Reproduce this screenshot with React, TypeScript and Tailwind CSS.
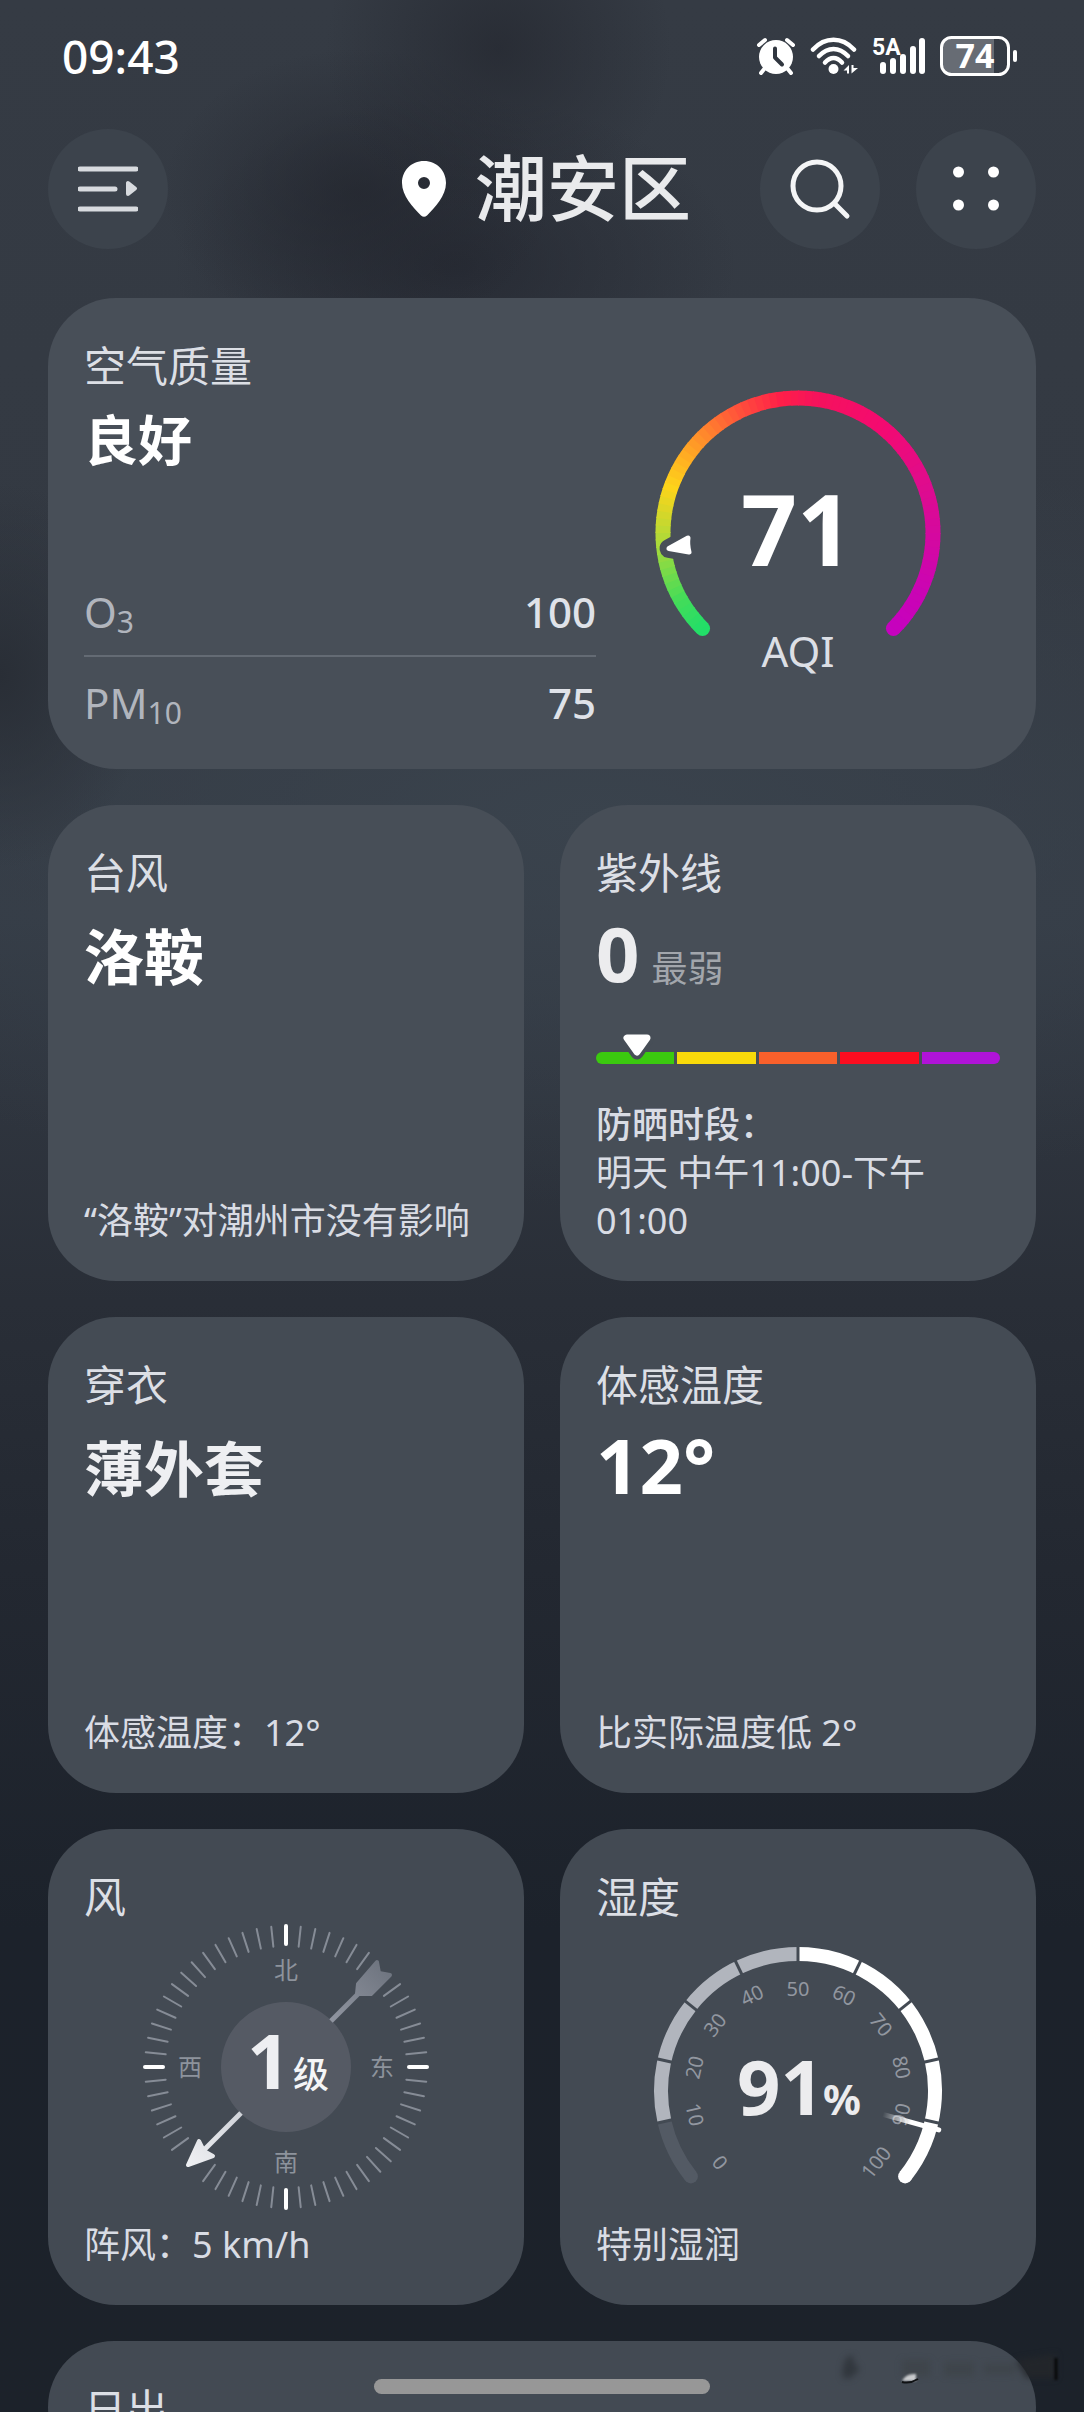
import type { ReactNode } from 'react';

const polar = (r: number, deg: number) => {
  const a = (deg * Math.PI) / 180;
  return [r * Math.sin(a), -r * Math.cos(a)] as const;
};

const arc = (r: number, from: number, to: number) => {
  const [x1, y1] = polar(r, from);
  const [x2, y2] = polar(r, to);
  return `M${x1} ${y1}A${r} ${r} 0 ${Math.abs(to - from) > 180 ? 1 : 0} 1 ${x2} ${y2}`;
};

/* ---------- Status bar ---------- */

function AlarmIcon() {
  return (
    <svg viewBox="0 0 40 38" className="h-[38px] w-10" fill="none" strokeLinecap="round" aria-hidden="true">
      <path d="M3 8 9 3M37 8 31 3M9 31 5 36M31 31 35 36" stroke="#fff" strokeWidth="4" />
      <circle cx="20" cy="20" r="17" fill="#fff" />
      <path d="M19 11.500V20.500L26 27.500" stroke="#30363f" strokeWidth="4" strokeLinejoin="round" />
    </svg>
  );
}

function WifiIcon() {
  return (
    <svg viewBox="0 0 48 38" className="h-[38px] w-12" fill="none" aria-hidden="true">
      <g stroke="#fff" strokeWidth="4.500" strokeLinecap="round">
        <path d="M3 12.500C15-.5 32-.5 44 12.500" />
        <path d="M9 19C18 9.500 29 9.500 38 19" />
        <path d="M15 25.500C20.500 19.500 26.500 19.500 32 25.500" />
      </g>
      <circle cx="23.500" cy="32" r="5" fill="#fff" />
      <path d="M39 28V36.500H37V33.500H33.500ZM41.500 36.500V28H43.500V31H48Z" fill="#fff" />
    </svg>
  );
}

function SignalIcon() {
  return (
    <svg viewBox="0 0 54 38" className="h-[38px] w-[54px] overflow-visible" aria-hidden="true">
      <text x="0" y="18" fill="#fff" fontSize="23" className="font-['Roboto',sans-serif] font-bold">5A</text>
      <g fill="#fff">
        <rect x="8" y="25" width="6" height="12" rx="3" />
        <rect x="18" y="21" width="6" height="16" rx="3" />
        <rect x="28" y="17" width="6" height="20" rx="3" />
        <rect x="38" y="9" width="6" height="28" rx="3" />
        <rect x="47" y="1" width="6" height="36" rx="3" />
      </g>
    </svg>
  );
}

function BatteryIcon() {
  return (
    <svg viewBox="0 0 78 40" className="h-10 w-[78px] overflow-visible" role="img" aria-label="74%">
      <path d="M13 2H54V38H13Q2 38 2 27V13Q2 2 13 2Z" fill="#676c74" />
      <rect x="1.500" y="1.500" width="67" height="37" rx="10" fill="none" stroke="#fff" strokeWidth="3" />
      <rect x="73" y="14" width="4" height="12" rx="2" fill="#fff" />
      <text x="35" y="32" textAnchor="middle" fill="#fff" fontSize="34" className="font-['Noto_Sans',sans-serif] font-bold">74</text>
    </svg>
  );
}

/* ---------- Shared pieces ---------- */

function Card({ title, className = '', children }: { title: string; className?: string; children?: ReactNode }) {
  return (
    <section className={`flex flex-col rounded-[68px] px-9 pt-10 pb-9 ${className}`}>
      <h2 className="text-[42px] leading-[56px] text-[#dcdfe5]">{title}</h2>
      {children}
    </section>
  );
}

function RoundButton({ label, children }: { label: string; children: ReactNode }) {
  return (
    <button type="button" aria-label={label} className="flex size-[120px] items-center justify-center rounded-full bg-[#3c434c]">
      {children}
    </button>
  );
}

function Footer({ children }: { children: ReactNode }) {
  return <p className="mt-auto text-[36px] leading-[48px] text-[#d9dce4]">{children}</p>;
}

/* ---------- Air quality ---------- */

const AQI_STOPS: [number, number[]][] = [
  [0, [34, 222, 104]],
  [0.06, [70, 220, 88]],
  [0.15, [170, 218, 58]],
  [0.24, [254, 212, 26]],
  [0.31, [255, 160, 38]],
  [0.4, [255, 84, 58]],
  [0.47, [255, 32, 72]],
  [0.53, [245, 18, 92]],
  [0.64, [244, 10, 112]],
  [0.76, [222, 12, 142]],
  [0.93, [202, 4, 180]],
  [1, [198, 2, 190]],
];

function aqiColor(t: number) {
  let i = 1;
  while (i < AQI_STOPS.length - 1 && AQI_STOPS[i][0] < t) i++;
  const [t0, a] = AQI_STOPS[i - 1];
  const [t1, b] = AQI_STOPS[i];
  const k = Math.max(0, Math.min(1, (t - t0) / (t1 - t0)));
  return `rgb(${a.map((v, n) => Math.round(v + (b[n] - v) * k)).join(',')})`;
}

function AqiGauge() {
  const steps = 90;
  const [sx, sy] = polar(135, -135);
  const [ex, ey] = polar(135, 135);
  const marker = 'M-129 15.500 -110 5Q-111 11-109 19Z';
  return (
    <svg viewBox="-150 -150 300 300" className="w-[300px] max-w-full" role="img" aria-label="AQI 71">
      <mask id="aqi-cut" maskUnits="userSpaceOnUse" x="-150" y="-150" width="300" height="300">
        <rect x="-150" y="-150" width="300" height="300" fill="#fff" />
        <path d={marker} fill="#000" stroke="#000" strokeWidth="19" strokeLinejoin="round" />
      </mask>
      <g mask="url(#aqi-cut)">
        <circle cx={sx} cy={sy} r="7.500" fill={aqiColor(0)} />
        <circle cx={ex} cy={ey} r="7.500" fill={aqiColor(1)} />
        {Array.from({ length: steps }, (_, i) => {
          const from = -135 + (270 / steps) * i;
          const to = Math.min(135, from + 270 / steps + 0.5);
          return <path key={i} d={arc(135, from, to)} fill="none" stroke={aqiColor((i + 0.5) / steps)} strokeWidth="15" />;
        })}
      </g>
      <path d={marker} fill="#fff" stroke="#fff" strokeWidth="5" strokeLinejoin="round" />
      <text x="-1" y="33" textAnchor="middle" fill="#fff" fontSize="98" className="font-bold">71</text>
      <text x="0" y="134" textAnchor="middle" fill="#dcdfe5" fontSize="42">AQI</text>
    </svg>
  );
}

function AirQuality() {
  return (
    <section className="col-span-2 grid grid-cols-[512fr_404fr] rounded-[68px] bg-[#484f58] px-9 pt-10 pb-6">
      <div className="flex flex-col">
        <h2 className="text-[42px] leading-[56px] text-[#dcdfe5]">空气质量</h2>
        <p className="mt-[10px] text-[54px] leading-[72px] font-bold text-white">良好</p>
        <dl className="mt-[89px] text-[42px] leading-[56px]">
          <div className="flex h-[92px] items-center justify-between border-b-2 border-[#646b74] pt-1">
            <dt className="text-[#b1b5bd]">O<sub className="bottom-[-5px] text-[30px]">3</sub></dt>
            <dd className="font-medium text-[#dfe2e8]">100</dd>
          </div>
          <div className="flex h-[88px] items-center justify-between pt-1">
            <dt className="text-[#b1b5bd]">PM<sub className="bottom-[-5px] text-[30px]">10</sub></dt>
            <dd className="font-medium text-[#dfe2e8]">75</dd>
          </div>
        </dl>
      </div>
      <div className="flex items-start justify-center pt-[45px]">
        <AqiGauge />
      </div>
    </section>
  );
}

/* ---------- UV index ---------- */

function UvBar() {
  return (
    <div className="relative mt-[63px]" role="img" aria-label="紫外线指数 0">
      <div className="flex h-3 gap-[3px] overflow-hidden rounded-full">
        <span className="flex-1 bg-[#3bc90f]" />
        <span className="flex-1 bg-[#f9da0a]" />
        <span className="flex-1 bg-[#f9602b]" />
        <span className="flex-1 bg-[#fc0d20]" />
        <span className="flex-1 bg-[#b013d8]" />
      </div>
      <svg viewBox="-17 -17 34 34" className="absolute top-[-21px] left-[6%] size-[34px]" aria-hidden="true">
        <path d="M-10-9H10L0 5Z" fill="#474e57" stroke="#474e57" strokeWidth="13" strokeLinejoin="round" />
        <path d="M-10-10H10L0 4Z" fill="#fff" stroke="#fff" strokeWidth="7" strokeLinejoin="round" />
      </svg>
    </div>
  );
}

/* ---------- Wind compass ---------- */

function Compass() {
  const hidden = [42, 48, 222, 228];
  return (
    <svg viewBox="-144 -142 288 286" className="w-[288px] max-w-full self-center overflow-visible" role="img" aria-label="东北风 1级">
      <defs>
        <linearGradient id="wind-head" gradientUnits="userSpaceOnUse" x1="-100" y1="100" x2="-44" y2="44">
          <stop offset="0" stopColor="#f0f1f4" />
          <stop offset="1" stopColor="#cfd2d8" />
        </linearGradient>
        <linearGradient id="wind-tail" gradientUnits="userSpaceOnUse" x1="46" y1="-46" x2="104" y2="-104">
          <stop offset="0" stopColor="#9095a0" />
          <stop offset="1" stopColor="#6c727d" />
        </linearGradient>
      </defs>
      {Array.from({ length: 60 }, (_, i) => i * 6)
        .filter((deg) => !hidden.includes(deg))
        .map((deg) => {
          const major = deg % 90 === 0;
          const [x1, y1] = polar(141, deg);
          const [x2, y2] = polar(major ? 123 : 121, deg);
          return (
            <line key={deg} x1={x1} y1={y1} x2={x2} y2={y2} stroke={major ? '#fff' : '#868c96'} strokeWidth={major ? 4 : 2} strokeLinecap="round" />
          );
        })}
      <circle r="65" fill="#555a64" />
      <path d="M-45 46-88 89" stroke="url(#wind-head)" strokeWidth="5" />
      <path d="M-98 98-87 74-82 84-73 89Z" fill="url(#wind-head)" stroke="url(#wind-head)" strokeWidth="4" strokeLinejoin="round" />
      <path d="M45-46 74-75" stroke="url(#wind-tail)" strokeWidth="5" />
      <path d="M71-73 72-83 91-105 93-94 104-92 85-73Z" fill="url(#wind-tail)" stroke="url(#wind-tail)" strokeWidth="4" strokeLinejoin="round" />
      <g fill="#8d939c" fontSize="24" textAnchor="middle">
        <text x="0" y="-88">北</text>
        <text x="0" y="104">南</text>
        <text x="-96" y="9">西</text>
        <text x="96" y="9">东</text>
      </g>
      <text x="-39" y="22" fill="#eeeff2" fontSize="76" className="font-bold">1</text>
      <text x="7" y="21" fill="#f4f5f7" fontSize="36" className="font-medium">级</text>
    </svg>
  );
}

/* ---------- Humidity gauge ---------- */

function HumidityGauge() {
  const span = 1800 / 7;
  const start = -span / 2;
  const at = (v: number) => start + (span * v) / 100;
  const [sx, sy] = polar(137, start);
  const [ex, ey] = polar(137, -start);
  const [nx1, ny1] = polar(88, at(91));
  const [nx2, ny2] = polar(146, at(91));
  const labels = [
    [0, -1.5],
    [10, 10],
    [20, 20],
    [30, 30],
    [40, 40],
    [50, 50],
    [60, 60],
    [70, 70],
    [80, 80],
    [90, 90],
    [100, 101.5],
  ];
  return (
    <svg viewBox="-150 -166 300 266" className="w-[300px] max-w-full self-center" role="img" aria-label="湿度 91%">
      <defs>
        <linearGradient id="needle" gradientUnits="userSpaceOnUse" x1={nx1} y1={ny1} x2={nx2} y2={ny2}>
          <stop offset="0" stopColor="#fff" stopOpacity="0" />
          <stop offset="0.5" stopColor="#fff" />
        </linearGradient>
      </defs>
      <circle cx={sx} cy={sy} r="7" fill="#535a64" />
      <circle cx={ex} cy={ey} r="7" fill="#fff" />
      <g fill="none" strokeWidth="14">
        <path d={arc(137, at(0), at(10))} stroke="#535a64" />
        <path d={arc(137, at(10), at(50))} stroke="#b1b5bd" />
        <path d={arc(137, at(50), at(100))} stroke="#fff" />
      </g>
      {[10, 20, 30, 40, 50, 60, 70, 80, 90].map((v) => {
        const [x1, y1] = polar(129, at(v));
        const [x2, y2] = polar(145, at(v));
        return <line key={v} x1={x1} y1={y1} x2={x2} y2={y2} stroke="#434a53" strokeWidth="3" />;
      })}
      {labels.map(([v, place]) => {
        const [x, y] = polar(v === 50 ? 102 : 106, at(place));
        const turn = at(v) > 90 ? at(v) - 180 : at(v) < -90 ? at(v) + 180 : at(v);
        return (
          <text key={v} transform={`translate(${x} ${y}) rotate(${turn})`} y="7" textAnchor="middle" fill="#9297a0" fontSize="20">
            {v}
          </text>
        );
      })}
      <line x1={nx1} y1={ny1} x2={nx2} y2={ny2} stroke="url(#needle)" strokeWidth="5" strokeLinecap="round" />
      <text x="-61" y="24" fill="#ececee" fontSize="76" className="font-bold">91</text>
      <text x="25" y="24" fill="#ececee" fontSize="42" className="font-bold">%</text>
    </svg>
  );
}

/* Faint smudge lying over the lower right corner. */
function Smudge() {
  return (
    <svg viewBox="0 0 224 40" className="absolute right-5 bottom-5 h-10 w-56 overflow-visible" aria-hidden="true">
      <g className="blur-[3px]">
        <path d="M2 22Q4 2 13 4Q13 14 20 16Q10 30 4 26Z" fill="#2d3238" opacity=".8" />
        <path d="M62 8H90V24H62ZM104 10H134V24H104ZM144 12H176V22H144Z" fill="#3a3f44" opacity=".5" />
        <path d="M176 8 216 2V26H186Z" fill="#24272b" opacity=".8" />
      </g>
      <path d="M216 6V28" stroke="#08090a" strokeWidth="3" className="blur-[1px]" />
      <path d="M62 29Q66 21 76 22V29Z" fill="#c9cbcd" className="blur-[1px]" />
      <path d="M62 30Q70 32 78 27" stroke="#101214" strokeWidth="2" fill="none" />
    </svg>
  );
}

/* ---------- Page ---------- */

export default function App() {
  return (
    <div className="relative isolate flex h-screen flex-col overflow-hidden bg-[#2b3039] font-['Noto_Sans','Noto_Sans_CJK_SC',sans-serif]">
      <div
        className="absolute inset-0 -z-10 bg-[radial-gradient(ellipse_16%_7%_at_46%_2%,#23262eaa,transparent),radial-gradient(ellipse_18%_6%_at_33%_8%,#22252daa,transparent),radial-gradient(ellipse_26%_7%_at_42%_11%,#22252ebb,transparent),radial-gradient(ellipse_14%_8%_at_0%_28%,#292e36,transparent),radial-gradient(ellipse_90%_16%_at_55%_34%,#3a434d,transparent),linear-gradient(to_bottom,#353b44_0%,#333942_30%,#343b45_38%,#292e37_54%,#232831_65%,#1c222b_80%,#1c222a_100%)]"
        aria-hidden="true"
      />
      <div className="flex h-28 shrink-0 items-center justify-between pr-[66px] pl-[62px] text-white">
        <time className="text-[46px] leading-[56px] font-medium">09:43</time>
        <div className="flex items-center gap-3.5">
          <AlarmIcon />
          <WifiIcon />
          <SignalIcon />
          <BatteryIcon />
        </div>
      </div>

      <header className="grid shrink-0 grid-cols-[1fr_auto_1fr] items-center px-12 pt-[17px] pb-[49px]">
        <RoundButton label="菜单">
          <svg viewBox="0 0 60 48" className="h-12 w-[60px]" fill="none" aria-hidden="true">
            <path d="M2 4H58M2 24H37M2 44H58" stroke="#d8dbdf" strokeWidth="5" strokeLinecap="round" />
            <path d="M50 18V29L57 23.500Z" fill="#d8dbdf" stroke="#d8dbdf" strokeWidth="4" strokeLinejoin="round" />
          </svg>
        </RoundButton>
        <div className="flex items-center gap-7 pl-2">
          <svg viewBox="0 0 46 56" className="h-14 w-[46px]" aria-hidden="true">
            <path d="M23 0C10 0 1 10 1 22C1 35 12 46 20 54.500Q23 57 26 54.500C34 46 45 35 45 22C45 10 36 0 23 0ZM23 16A6 6 0 1 1 23 28A6 6 0 1 1 23 16Z" fill="#fff" fillRule="evenodd" />
          </svg>
          <h1 className="pb-1 text-[72px] leading-[96px] font-medium text-[#e9eaec]">潮安区</h1>
        </div>
        <div className="flex justify-end gap-9">
          <RoundButton label="搜索">
            <svg viewBox="0 0 62 62" className="size-[62px]" fill="none" stroke="#f4f5f6" strokeWidth="5" strokeLinecap="round" aria-hidden="true">
              <circle cx="28" cy="28" r="24" />
              <path d="M46 46 58 58" />
            </svg>
          </RoundButton>
          <RoundButton label="更多">
            <svg viewBox="0 0 46 46" className="size-[46px]" fill="#fff" aria-hidden="true">
              <circle cx="5.500" cy="6" r="5.500" />
              <circle cx="40.500" cy="6" r="5.500" />
              <circle cx="5.500" cy="39" r="5.500" />
              <circle cx="40.500" cy="39" r="5.500" />
            </svg>
          </RoundButton>
        </div>
      </header>

      <main className="grid min-h-0 flex-1 grid-cols-2 content-start gap-9 overflow-y-auto px-12 [scrollbar-width:none]">
        <AirQuality />

        <Card title="台风" className="aspect-square bg-[#474e57]">
          <p className="mt-5 text-[60px] leading-[72px] font-bold text-white">洛鞍</p>
          <Footer>“洛鞍”对潮州市没有影响</Footer>
        </Card>

        <Card title="紫外线" className="aspect-square bg-[#474e57]">
          <p className="mt-4 flex h-[72px] items-baseline gap-3 leading-[72px]">
            <span className="text-[76px] font-bold text-[#ececee]">0</span>
            <span className="text-[36px] text-[#a2a6ac]">最弱</span>
          </p>
          <UvBar />
          <Footer>
            <span className="block font-medium">防晒时段：</span>
            明天 中午11:00-下午01:00
          </Footer>
        </Card>

        <Card title="穿衣" className="aspect-square bg-[#444b54]">
          <p className="mt-5 text-[60px] leading-[72px] font-semibold text-[#eeeff2]">薄外套</p>
          <Footer>体感温度：12°</Footer>
        </Card>

        <Card title="体感温度" className="aspect-square bg-[#444b54]">
          <p className="mt-4 text-[76px] leading-[72px] font-bold text-white">12°</p>
          <Footer>比实际温度低 2°</Footer>
        </Card>

        <Card title="风" className="aspect-square bg-[#434a53]">
          <Compass />
          <Footer>阵风：5 km/h</Footer>
        </Card>

        <Card title="湿度" className="aspect-square bg-[#434a53]">
          <HumidityGauge />
          <Footer>特别湿润</Footer>
        </Card>

        <Card title="日出" className="col-span-2 bg-[#434a53]" />
      </main>

      <Smudge />
      <div className="absolute bottom-[18px] left-1/2 h-[15px] w-[31%] -translate-x-1/2 rounded-full bg-[#979797]" aria-hidden="true" />
    </div>
  );
}
